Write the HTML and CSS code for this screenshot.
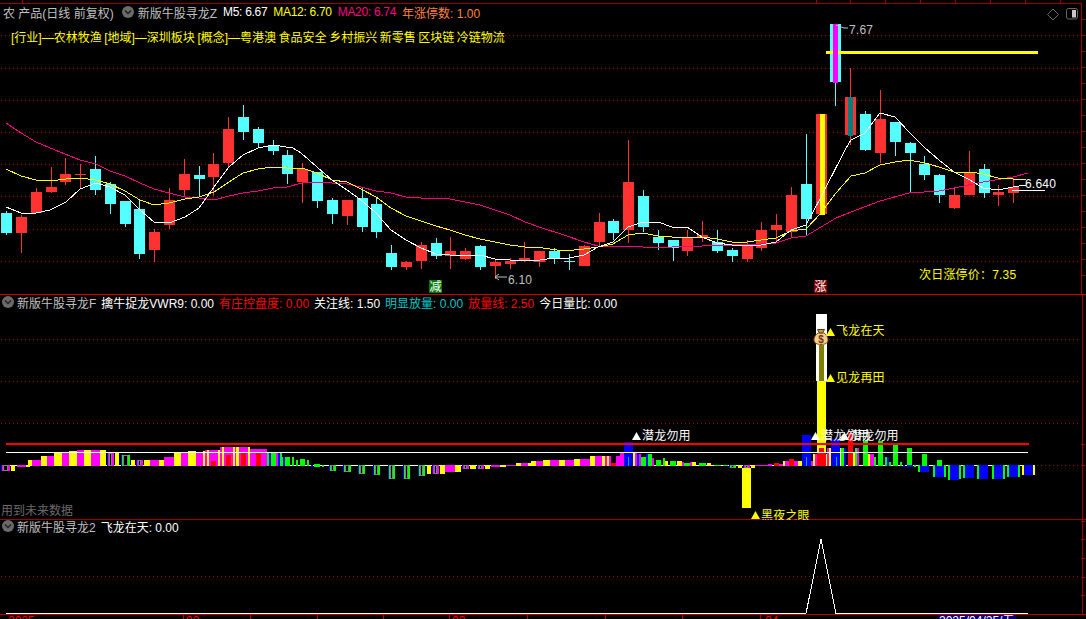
FILE: index.html
```html
<!DOCTYPE html>
<html lang="zh">
<head>
<meta charset="utf-8">
<title>新版牛股寻龙</title>
<link rel="stylesheet" href="styles.css">
</head>
<body>
<main class="terminal">
  <section class="panel panel-price">
    <svg class="chart" viewBox="0 0 1086 295" width="1086" height="295">
      <g id="price-layer"></g>
      <text class="label grey" x="849" y="34">7.67</text>
      <path class="thin grey-stroke" d="M836 25l8 3h4"/>
      <text class="label grey" x="508" y="284">6.10</text>
      <path class="thin grey-stroke" d="M495 277h12M495 277l4-3M495 277l4 3"/>
      <text class="label white" x="1025" y="188">6.640</text>
      <text class="label yellow" x="919" y="279">次日涨停价：7.35</text>
      <rect class="badge-green" x="429" y="280" width="13" height="13"/>
      <text class="badge-text" x="429.500" y="291">减</text>
      <rect class="badge-red" x="814" y="280" width="13" height="13"/>
      <text class="badge-text" x="814.500" y="291">涨</text>
      <path class="icon-line" d="M1053 9l5.500 5.500-5.500 5.500-5.500-5.500z"/>
      <rect class="icon-line" x="1066.500" y="8.500" width="11" height="10.500" rx="2"/>
      <rect class="icon-fill" x="1072" y="10" width="4" height="7.500"/>
    </svg>
    <div class="overlay">
      <header class="legend legend-main">
        <span class="grey name">农 产品(日线 前复权)</span>
        <svg class="chevron" viewBox="0 0 12 12" width="12" height="12"><circle cx="6" cy="6" r="6"/><path d="M3 4.500l3 3 3-3"/></svg>
        <span class="grey">新版牛股寻龙Z</span>
        <span class="white tight">M5: 6.67</span>
        <span class="yellow tight">MA12: 6.70</span>
        <span class="pink tight">MA20: 6.74</span>
        <span class="orange">年涨停数: 1.00</span>
      </header>
      <p class="tags">[行业]—农林牧渔 [地域]—深圳板块 [概念]—粤港澳 食品安全 乡村振兴 新零售 区块链 冷链物流</p>
    </div>
  </section>

  <section class="panel panel-volume">
    <svg class="chart" viewBox="0 295 1086 225" width="1086" height="225">
      <g id="volume-layer"></g>
      <g>
        <path class="bag" d="M818 333c-3 2-4 5-4 7 0 3 3 4.500 7 4.500s7-1.500 7-4.500c0-2-1-5-4-7z"/>
        <path class="bag-neck" d="M817.500 329.500h7l-2 3.500h-3z"/>
        <text class="bag-sign" x="818.200" y="343">$</text>
      </g>
      <polygon class="mark-yellow" points="826,336 835,336 830.500,328"/>
      <text class="label yellow" x="836" y="335">飞龙在天</text>
      <polygon class="mark-yellow" points="826,382 835,382 830.500,374"/>
      <text class="label yellow" x="836" y="382">见龙再田</text>
      <polygon class="mark-white" points="632,440 641,440 636.500,432"/>
      <text class="label white" x="642" y="440">潜龙勿用</text>
      <polygon class="mark-white" points="811,440 820,440 815.500,432"/>
      <text class="label white" x="821" y="440">潜龙勿用</text>
      <polygon class="mark-white" points="840,440 849,440 844.500,432"/>
      <text class="label white" x="850" y="440">潜龙勿用</text>
      <polygon class="mark-yellow" points="751,519 760,519 755.500,511"/>
      <text class="label yellow" x="761" y="519.500">黑夜之眼</text>
      <text class="dim" x="1" y="515">用到未来数据</text>
    </svg>
    <div class="overlay">
      <header class="legend legend-volume">
        <svg class="chevron" viewBox="0 0 12 12" width="12" height="12"><circle cx="6" cy="6" r="6"/><path d="M3 4.500l3 3 3-3"/></svg>
        <span class="grey">新版牛股寻龙F</span>
        <span class="white">擒牛捉龙VWR9: 0.00</span>
        <span class="red">有庄控盘度: 0.00</span>
        <span class="white">关注线: 1.50</span>
        <span class="cyan">明显放量: 0.00</span>
        <span class="red">放量线: 2.50</span>
        <span class="white">今日量比: 0.00</span>
      </header>
    </div>
  </section>

  <section class="panel panel-signal">
    <svg class="chart" viewBox="0 520 1086 99" width="1086" height="99">
      <g id="signal-layer"></g>
      <text class="red" x="8" y="625">2025</text>
      <text class="red" x="186" y="625">02</text>
      <text class="red" x="452" y="625">03</text>
      <text class="red" x="765" y="625">04</text>
      <rect class="date-box" x="938" y="615" width="78" height="5"/>
      <text class="white" x="939" y="625">2025/04/25/五</text>
    </svg>
    <div class="overlay">
      <header class="legend legend-signal">
        <svg class="chevron" viewBox="0 0 12 12" width="12" height="12"><circle cx="6" cy="6" r="6"/><path d="M3 4.500l3 3 3-3"/></svg>
        <span class="grey">新版牛股寻龙2</span>
        <span class="white">飞龙在天: 0.00</span>
      </header>
    </div>
  </section>
</main>
<script src="app.js"></script>
</body>
</html>
```

FILE: styles.css
```css
* { box-sizing: border-box; }
html, body { margin: 0; height: 100%; background: #000; overflow: hidden; }
body, text {
  font-family: "Liberation Sans", "Noto Sans CJK SC", sans-serif;
  font-size: 12px;
}
.terminal { display: flex; flex-direction: column; width: 1086px; height: 619px; }
.panel { display: grid; width: 100%; }
.panel > * { grid-area: 1 / 1; }
.panel-price { height: 295px; }
.panel-volume { height: 225px; }
.panel-signal { height: 99px; }
.chart { display: block; }
.overlay { display: flex; flex-direction: column; align-items: flex-start; }
.legend { display: flex; align-items: center; height: 14px; white-space: nowrap; }
.tight { letter-spacing: -.3px; }
.legend-main { margin-top: 5px; padding-left: 3px; }
.legend-main .name { margin-right: 8px; }
.legend-main span + span { margin-left: 6px; }
.legend-main .chevron + span { margin-left: 4px; }
.legend-volume { margin-top: 0; padding-left: 2px; }
.legend-volume span { margin-right: 5px; }
.legend-volume .chevron, .legend-signal .chevron { margin-right: 3px; }
.legend-signal { margin-top: -1px; padding-left: 2px; }
.legend-signal span { margin-right: 5px; }
.chevron { flex: none; }
.chevron circle { fill: #6a6a6a; }
.chevron path { fill: none; stroke: #222; stroke-width: 1.500; }
.tags { margin: 12px 0 0 11px; color: #ffff00; white-space: nowrap; line-height: 14px; word-spacing: -.8px; }
.grey { color: #c0c0c0; fill: #c0c0c0; }
.white { color: #fff; fill: #fff; }
.yellow { color: #ffff00; fill: #ffff00; }
.pink { color: #ff0080; }
.orange { color: #ff8040; }
.red { color: #ff0000; fill: #ff0000; }
.cyan { color: #00c8c8; }
.dim { fill: #6a6a6a; }
.label { letter-spacing: .2px; }
.thin { fill: none; stroke-width: 1; }
.grey-stroke { stroke: #c0c0c0; }
.badge-green { fill: #007800; }
.badge-red { fill: #800000; }
.badge-text { fill: #fff; }
.icon-line { fill: none; stroke: #6a6a6a; stroke-width: 1; }
.icon-fill { fill: #c8c8c8; }
.mark-yellow { fill: #ffff00; }
.mark-white { fill: #fff; }
.bag { fill: #f0d090; stroke: #8a4a12; stroke-width: 1; }
.bag-neck { fill: #c9a040; stroke: #5a3208; stroke-width: 1; }
.bag-sign { font-size: 10px; font-weight: 700; fill: #7a2e10; }
.date-box { fill: #000080; }
.grid-dots { stroke: #a00000; stroke-width: 1; stroke-dasharray: 1 3; shape-rendering: crispEdges; }
.rule { stroke-width: 1; shape-rendering: crispEdges; }
.block { shape-rendering: crispEdges; }
.trend { fill: none; stroke-width: 1; shape-rendering: crispEdges; }
```

FILE: app.js
```js
const NS = 'http://www.w3.org/2000/svg';
const CY = '#54ffff', RD = '#ff3232', Y = '#ffff00', M = '#ff00ff', G = '#00ff00', B = '#0000ff', R = '#ff0000';

function add(layer, tag, attrs) {
  const el = document.createElementNS(NS, tag);
  for (const k in attrs) el.setAttribute(k, attrs[k]);
  layer.appendChild(el);
  return el;
}
function box(layer, x0, x1, y0, y1, fill) {
  add(layer, 'rect', { class: 'block', x: x0, y: y0, width: x1 - x0, height: y1 - y0, fill });
}
function hline(layer, x0, x1, y, color, w) {
  add(layer, 'line', { class: 'rule', x1: x0, x2: x1, y1: y, y2: y, stroke: color, 'stroke-width': w || 1 });
}
function vline(layer, x, y0, y1, color) {
  add(layer, 'line', { class: 'rule', x1: x, x2: x, y1: y0, y2: y1, stroke: color });
}
function dots(layer, y) {
  add(layer, 'line', { class: 'grid-dots', x1: 1, x2: 1081, y1: y, y2: y });
}
function trend(layer, pts, color) {
  add(layer, 'polyline', { class: 'trend', stroke: color, points: pts.map(p => p.join(',')).join(' ') });
}

/* ---------- price panel ---------- */
const price = document.getElementById('price-layer');
[35.5, 68.5, 100.5, 132.5, 164.5, 196.5, 229.5, 261.5].forEach(y => dots(price, y));
hline(price, 0, 1082, 3.5, '#a00000');
[22, 816, 850, 885, 920, 955, 990, 1025, 1060].forEach(x => vline(price, x + .5, 0, 3, '#a00000'));
vline(price, 1081.5, 3, 294, '#a00000');
for (let y = 19.5; y < 290; y += 16) hline(price, 1081, 1085, y, '#a00000');
hline(price, 0, 1086, 294.5, '#d00000');

const candles = [
  ['c',213,233,211,235],['r',217,233,215,253],['r',192,213,188,213],['r',187,192,167,193],['r',174,182,158,185],
  ['r',174,175,164,188],['c',169,190,156,195],['c',184,204,182,214],['c',201,224,201,227],['c',209,254,200,259],
  ['r',232,250,229,262],['r',200,225,188,229],['r',174,190,159,197],['c',175,179,166,197],['r',164,177,153,196],
  ['r',129,163,117,167],['c',117,132,105,140],['c',129,143,127,148],['c',145,151,140,155],['c',155,174,150,184],
  ['r',169,182,163,203],['c',172,201,172,208],['c',200,214,198,224],['r',200,216,200,225],['c',198,227,188,232],
  ['c',204,232,198,238],['c',253,267,245,270],['r',262,267,261,270],['r',245,261,242,269],['c',243,256,238,259],
  ['r',251,256,237,269],['r',251,259,248,260],['c',246,267,245,270],['r',262,266,259,279],['r',261,264,258,269],
  ['r',258,260,242,262],['r',251,262,251,267],['c',251,258,248,264],['c',261,262,254,270],['r',246,266,245,266],
  ['r',222,242,213,246],['c',221,233,219,240],['r',182,230,140,243],['c',196,227,190,232],['c',237,243,230,250],
  ['c',240,248,240,261],['r',238,251,230,256],['r',235,237,221,242],['c',242,251,230,253],['c',250,256,248,262],
  ['r',246,259,240,262],['r',230,248,222,251],['r',225,230,214,242],['r',195,232,187,237],['c',184,219,134,235],
  ['r',114,214,114,214],['c',24,82,24,106],['r',97,135,68,145],['c',114,150,111,151],['r',119,153,90,163],
  ['c',122,142,122,156],['c',143,153,142,193],['c',164,175,156,180],['c',175,195,174,203],['r',195,208,187,209],
  ['r',172,195,151,195],['c',169,193,164,198],['r',192,195,185,206],['r',187,193,178,203]
];
candles.forEach((c, i) => {
  const x = Math.floor(6.6 + 14.81 * i);
  const col = c[0] === 'c' ? CY : RD;
  vline(price, x + .5, c[3], c[4], col);
  box(price, x - 5, x + 6, c[1], Math.max(c[2], c[1] + 1), col);
});
/* recoloured signal candles */
box(price, 820, 825, 114, 215, Y);
box(price, 826, 1038, 51, 54, Y);
box(price, 833, 838, 24, 83, M);
box(price, 848, 853, 97, 136, '#008080');

trend(price, [[6,123],[21,133],[36,142],[55,150],[80,160],[96,164],[110,171],[125,176],[140,183],[154,189],[169,193],[185,197],[199,198],[214,200],[229,196],[243,193],[258,191],[273,188],[287,187],[302,183],[317,182],[332,183],[347,184],[361,187],[376,191],[391,193],[406,197],[421,198],[436,198],[450,199],[465,202],[480,205],[495,210],[510,215],[525,222],[542,228],[564,235],[584,242],[598,246],[628,246],[643,247],[672,247],[702,246],[732,245],[761,244],[776,243],[791,238],[806,236],[821,227],[836,218],[851,212],[880,201],[909,193],[939,191],[954,188],[983,182],[1013,177],[1028,173]], '#ff0080');
trend(price, [[6,169],[21,176],[36,180],[50,181],[66,179],[80,178],[96,180],[110,184],[125,191],[140,200],[154,205],[169,203],[185,199],[199,197],[214,192],[229,182],[243,173],[258,169],[273,167],[287,168],[302,168],[317,173],[332,180],[347,182],[361,189],[376,197],[391,208],[406,216],[421,221],[436,226],[450,230],[465,235],[480,239],[495,242],[510,245],[525,247],[543,248],[564,251],[584,249],[598,247],[613,244],[628,235],[643,233],[658,236],[672,237],[687,237],[702,237],[717,239],[732,242],[747,242],[761,240],[776,238],[791,231],[806,229],[821,213],[836,193],[851,176],[865,173],[880,165],[895,162],[909,160],[925,163],[939,167],[954,172],[970,172],[983,174],[998,178],[1013,179],[1026,180]], Y);
trend(price, [[6,207],[21,213],[36,213],[50,210],[66,202],[80,189],[96,183],[110,187],[125,195],[140,210],[154,222],[169,223],[185,217],[199,208],[214,187],[229,167],[243,155],[258,148],[273,145],[293,148],[301,153],[317,167],[332,180],[347,190],[361,200],[376,213],[391,230],[406,240],[421,248],[436,254],[450,255],[465,255],[480,255],[495,259],[510,260],[525,260],[540,260],[554,258],[569,258],[584,255],[598,247],[613,242],[628,227],[643,222],[658,222],[672,227],[687,227],[702,237],[717,243],[732,245],[761,245],[776,242],[791,230],[806,225],[821,197],[845,150],[851,140],[865,133],[880,113],[895,117],[909,132],[925,148],[939,160],[954,172],[970,180],[983,188],[998,190],[1013,187],[1026,185]], '#ffffff');
hline(price, 1012, 1045, 190.5, '#ffffff');

/* ---------- volume panel ---------- */
const vol = document.getElementById('volume-layer');
[339.5, 381.5, 423.5].forEach(y => dots(vol, y));
dots(vol, 465.5);
hline(vol, 6, 1030, 465.5, '#ffffff');
vline(vol, 1082.5, 295, 519, '#a00000');
[444.5, 465.5].forEach(y => hline(vol, 1081, 1085, y, '#a00000'));

/* bars are in measured image units: x/2.888, y/3 */
const zx5 = x => x / 2.888, zx6 = x => 543 + x / 2.888, zy = y => 430 + y / 3;
function bars(list, zx) {
  list.forEach(b => {
    const x0 = Math.round(zx(b[0])), x1 = Math.max(Math.round(zx(b[1])), x0 + 1);
    const y0 = Math.round(zy(b[2])), y1 = Math.max(Math.round(zy(b[3])), y0 + 1);
    box(vol, x0, x1, y0, y1, b[4]);
    if (b[5]) {
      box(vol, x0, x0 + 1, y0, y1, B);
      add(vol, 'rect', { class: 'block', x: x0 + 2.5, y: y0 + .5, width: Math.max(x1 - x0 - 5, 1), height: Math.max(y1 - y0 - 1, 1), fill: '#000', stroke: '#808080', 'stroke-width': 1 });
    }
  });
}
bars([
 [4,30,105,122,M,1],[32,43,105,122,Y],[49,75,105,110,M],[75,86,105,110,Y],[81,92,90,107,Y],[92,118,90,107,M],[118,135,78,107,Y],[135,156,78,107,M],
 [156,178,68,107,Y],[178,199,68,107,M],[199,222,62,107,Y],[222,243,60,107,M],[243,263,60,107,Y],[263,290,60,107,M],[290,306,60,107,Y],[308,330,68,107,M,1],
 [332,344,68,107,Y],[350,374,75,107,G,1],[378,390,90,107,Y],[392,414,90,107,M,1],[416,433,90,107,Y],[433,460,90,107,M],[460,475,90,107,Y],[475,502,81,107,M],
 [502,523,68,107,Y],[523,544,68,107,M],[544,566,63,107,Y],[566,586,66,107,M],[586,592,63,107,Y],[592,597,60,107,M],[597,603,60,107,Y],[603,631,60,107,M],
 [609,623,93,107,R],[631,635,60,107,Y],[635,641,50,107,M],[641,647,50,107,Y],[647,673,50,107,M],[653,667,75,107,R],[673,679,50,107,Y],[679,683,50,107,M],
 [683,689,50,107,Y],[689,716,50,107,M],[696,710,69,107,R],[716,722,50,107,Y],[722,772,57,107,M],[739,754,69,107,R],[772,778,69,107,G],[778,783,69,107,B],
 [783,798,69,107,G],[798,803,69,107,M],[803,808,69,107,B],[808,814,69,107,G],[814,818,81,107,G],[818,822,81,107,B],[823,838,81,107,G],[843,848,81,107,G],
 [855,861,90,107,G],[866,882,87,107,G],[887,892,90,107,G],[898,905,105,110,B],[908,925,102,110,G],[930,936,105,110,G],[950,971,106,122,G,1],[992,1014,106,125,G,1],
 [1034,1055,106,131,G,1],[1077,1098,106,134,G,1],[1120,1141,106,146,G,1],[1163,1185,106,146,G,1],[1206,1227,106,137,G,1],[1233,1245,106,131,Y],[1247,1268,106,131,M,1],
 [1271,1286,106,131,Y],[1286,1314,106,125,M],[1314,1330,106,125,Y],[1334,1354,106,117,M,1],[1357,1375,106,117,Y],[1378,1398,106,117,M,1],[1402,1416,106,116,Y],
 [1418,1444,106,110,M],[1444,1460,106,110,Y],[1460,1490,105,107,M],[1490,1504,99,107,Y],[1504,1525,99,107,M],[1525,1533,99,107,Y],[1533,1548,93,107,Y],[1548,1568,93,107,M]
], zx5);

/* tall dragon column, under the right-hand bars */
box(vol, 816, 827, 314, 381, '#ffffff');
box(vol, 819, 824, 345, 381, '#808000');
box(vol, 817, 826, 381, 465, Y);

bars([
 [0,20,90,107,Y],[20,46,90,107,M],[46,64,90,107,Y],[64,90,90,107,M],[90,107,87,107,Y],[107,135,87,107,M],[135,150,78,107,Y],[150,170,78,107,M],[170,180,78,107,Y],
 [180,185,78,107,M],[185,191,78,107,Y],[191,197,78,107,M],[197,212,99,107,R],[212,222,78,107,M],[222,233,69,107,M],[233,260,36,107,B],[245,246,82,107,'#00a0ff'],
 [260,266,69,107,Y],[266,272,69,107,M],[272,278,72,107,B],[278,283,72,107,M],[283,298,81,107,G],[298,303,72,107,B],[303,315,72,107,G],[315,320,84,107,M],[325,340,90,107,G],
 [347,352,84,107,G],[352,362,93,107,Y],[366,384,93,107,G],[387,400,93,107,Y],[400,406,96,107,M],[408,425,99,107,G],[425,430,96,107,M],[430,443,96,107,Y],[450,470,99,107,G],
 [473,485,99,107,Y],[487,492,105,107,Y],[495,515,105,107,G],[520,535,105,107,G],[537,558,106,113,G,1],[562,575,106,114,Y],[577,598,106,113,M,1],[601,612,106,113,Y],
 [612,650,105,107,M],[650,660,102,107,M],[667,682,99,107,R],[682,692,102,107,M],[692,700,93,107,Y],[700,710,93,107,M],[710,725,87,107,R],[725,735,93,107,M],[735,748,93,107,Y],
 [748,774,15,107,B],[760,761,82,107,'#00a0ff'],[774,780,93,107,M],[780,786,72,107,Y],[786,792,72,107,M],[791,817,69,107,R],[797,812,54,69,R],[817,820,72,107,Y],[820,826,54,107,M],[826,832,54,107,Y],
 [832,858,27,107,B],[845,846,82,107,'#00a0ff'],[858,862,54,107,Y],[862,868,54,107,G],[868,874,54,107,B],[881,895,9,107,R],[895,901,66,107,Y],[901,907,54,107,G],[907,913,54,107,M],
 [924,938,33,107,G],[938,944,72,107,Y],[944,955,72,107,M],[955,962,81,107,G],[967,982,33,107,G],[988,993,81,107,G],[993,999,81,107,B],[999,1005,96,107,G],[1011,1025,45,107,G],
 [1030,1037,96,107,G],[1051,1066,54,107,G],[1040,1045,105,110,B],[1050,1070,106,110,B],[1072,1078,106,110,G],[1083,1089,106,126,G],[1089,1115,106,126,B],[1094,1109,72,107,G],
 [1125,1132,106,141,G],[1132,1158,106,141,B],[1158,1164,106,141,G],[1138,1152,90,107,G],[1170,1175,106,150,G],[1175,1200,106,150,B],[1201,1207,106,147,G],[1213,1219,106,144,G],
 [1219,1245,106,144,B],[1253,1259,106,147,G],[1259,1285,106,147,B],[1297,1303,106,147,G],[1303,1328,106,147,B],[1328,1334,106,147,G],[1340,1346,106,141,G],[1346,1372,106,141,B],
 [1372,1377,106,141,G],[1383,1389,106,135,Y],[1389,1415,106,135,B],[1415,1421,106,135,Y],[575,601,114,234,Y]
], zx6);

box(vol, 6, 1029, 443, 445, R);
hline(vol, 6, 1028, 452.5, '#ffffff');
hline(vol, 0, 1086, 519.5, '#a00000');

/* ---------- signal panel ---------- */
const sig = document.getElementById('signal-layer');
dots(sig, 576.5);
vline(sig, 1082.5, 520, 614, '#a00000');
[521.5, 539.5, 558.5, 577.5, 595.5].forEach(y => hline(sig, 1081, 1085, y, '#a00000'));
trend(sig, [[6,613.5],[806,613.5],[821,539],[836,613.5],[1028,613.5]], '#ffffff');
hline(sig, 0, 1086, 614.5, '#c00000');
[183, 250, 317, 383, 449, 527, 605, 682, 760].forEach(x => vline(sig, x + .5, 615, 619, '#c00000'));
```
